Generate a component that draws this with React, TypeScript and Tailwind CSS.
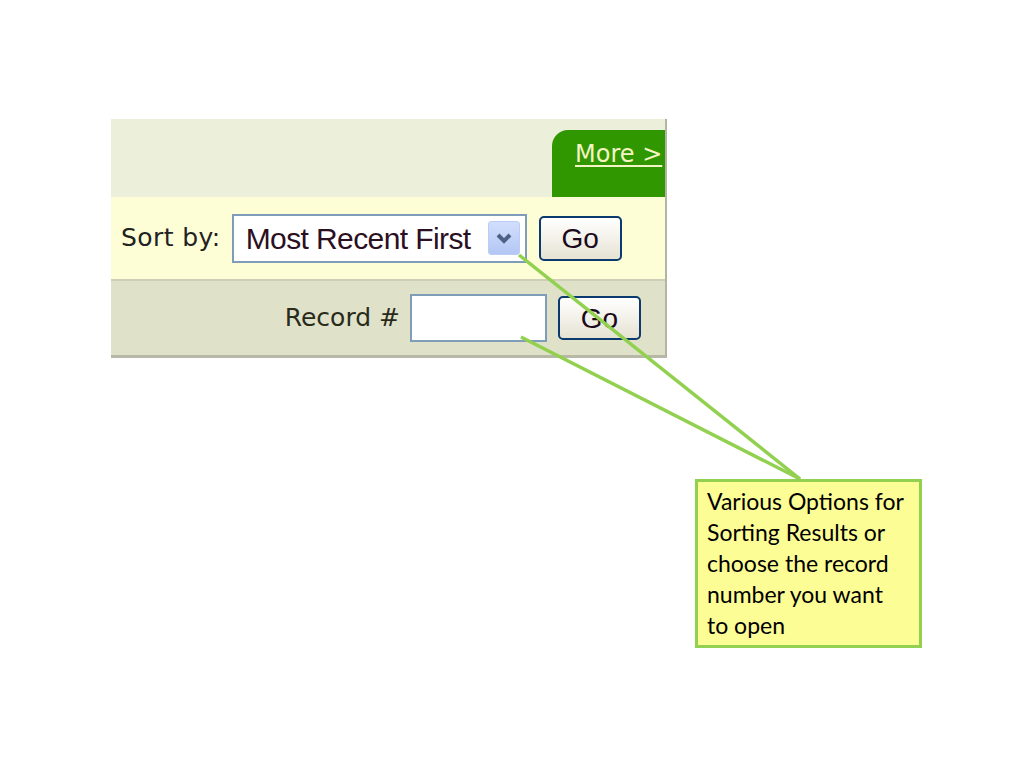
export default function App() {
  return (
    <div className="relative w-[1024px] h-[768px] bg-white overflow-hidden">
      {/* Results toolbar */}
      <div className="ml-[111px] pt-[119px]">
        <div className="w-[556px] border-r-2 border-b-[3px] border-r-[#b4b4a4] border-b-[#b8b8a8] overflow-hidden">
          <div className="h-[78px] bg-[#ecefd9] flex items-end">
            <div className="ml-auto w-[113px] h-[67px] bg-[#309700] rounded-tl-[16px] pl-[23px] pt-[10px] shrink-0 overflow-hidden">
              <a className="text-[24px] leading-[28px] text-[#f4f4c4] underline underline-offset-[3px] whitespace-nowrap font-['DejaVu_Sans',sans-serif]">
                More &gt;
              </a>
            </div>
          </div>

          <div className="h-[84px] bg-[#fefed6] border-b-2 border-[#cdcfb6] flex items-center pl-[10px] font-['DejaVu_Sans',sans-serif]">
            <span className="text-[25px] tracking-[0.4px] text-[#222] mr-[11px]">Sort by:</span>
            <div className="w-[295px] h-[49px] border-2 border-[#7f9db9] bg-white flex items-center pl-[12px] pr-[5px]">
              <span className="flex-1 text-[30px] tracking-[-0.6px] text-[#2b0f22] font-['Liberation_Sans',sans-serif]">
                Most Recent First
              </span>
              <div className="w-[32px] h-[34px] rounded-[3px] border border-[#b9cdf5] bg-gradient-to-b from-[#d2defc] to-[#b3c7f5] flex items-center justify-center">
                <svg width="18" height="14" viewBox="0 0 18 14">
                  <path d="M3 4 L9 10 L15 4" fill="none" stroke="#4d6185" strokeWidth="4" />
                </svg>
              </div>
            </div>
            <button className="ml-[12px] w-[83px] h-[45px] rounded-[5px] border-2 border-[#0a3a6e] bg-gradient-to-b from-white to-[#e6e3d4] text-[28px] text-[#1a0a1a] font-['Liberation_Sans',sans-serif]">
              Go
            </button>
          </div>

          <div className="h-[74px] bg-[#dfe2c9] flex items-center justify-end pr-[24px] font-['DejaVu_Sans',sans-serif]">
            <span className="text-[25px] text-[#2a2a1a] mr-[10px]">Record #</span>
            <input className="w-[137px] h-[48px] border-2 border-[#7f9db9] bg-white outline-none" />
            <button className="ml-[11px] w-[83px] h-[44px] rounded-[5px] border-2 border-[#0a3a6e] bg-gradient-to-b from-white to-[#e6e3d4] text-[28px] text-[#1a0a1a] font-['Liberation_Sans',sans-serif]">
              Go
            </button>
          </div>
        </div>
      </div>

      {/* Callout */}
      <div className="ml-[695px] mt-[121px] w-[227px] h-[169px] border-[3px] border-[#92d050] bg-[#fdfd96] pl-[9px] pt-[4px] text-[23px] leading-[31px] text-black font-['Lato',sans-serif]">
        Various Options for<br />
        Sorting Results or<br />
        choose the record<br />
        number you want<br />
        to open
      </div>

      {/* Connector lines */}
      <svg className="absolute inset-0 pointer-events-none" width="1024" height="768">
        <line x1="519" y1="255" x2="800" y2="479" stroke="#92d050" strokeWidth="3.5" />
        <line x1="521" y1="337" x2="800" y2="479" stroke="#92d050" strokeWidth="3.5" />
      </svg>
    </div>
  );
}
